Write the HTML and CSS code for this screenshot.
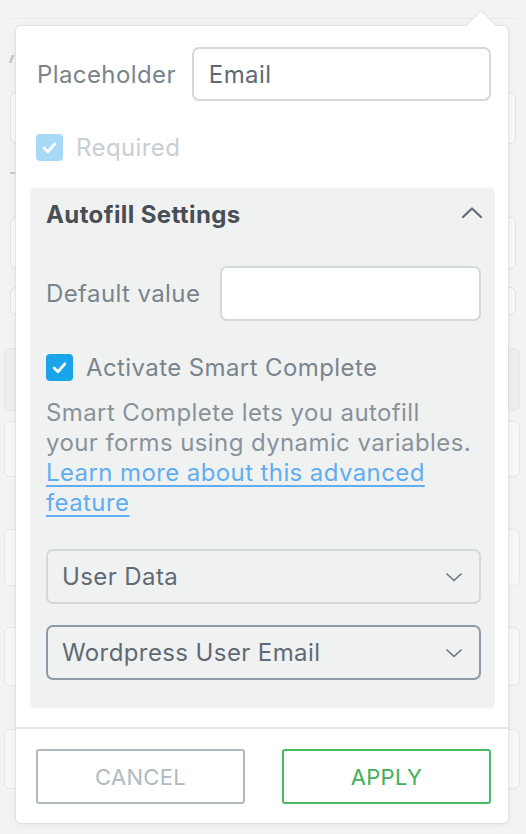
FILE: index.html
```html
<!DOCTYPE html>
<html>
<head>
<meta charset="utf-8">
<link rel="stylesheet" href="styles.css">
</head>
<body>
<div class="page">
  <div class="topbar"></div>
  <div class="bg-content">
    <div class="bg-mark"></div>
    <div class="bg-input first"></div>
    <div class="bg-mark dash"></div>
    <div class="bg-input second"></div>
    <div class="bg-input short"></div>
    <div class="bg-card dark"></div>
    <div class="bg-card c1"></div>
    <div class="bg-card c2"></div>
    <div class="bg-card c3"></div>
    <div class="bg-card c4"></div>
  </div>
</div>

<div class="popup">
  <div class="arrow"></div>
  <div class="popup-body">
    <div class="row placeholder-row">
      <label class="label">Placeholder</label>
      <div class="input">Email</div>
    </div>
    <div class="check-row required">
      <span class="checkbox light">
        <svg viewBox="0 0 16 16" width="16" height="16"><polyline points="3,8.5 6.5,12 13,4.5" fill="none" stroke="#fff" stroke-width="2.6" stroke-linecap="round" stroke-linejoin="round"/></svg>
      </span>
      <span class="check-text">Required</span>
    </div>

    <div class="section">
      <div class="section-head">
        <span class="section-title">Autofill Settings</span>
        <svg class="chev-up" viewBox="0 0 22 13" width="22" height="13"><polyline points="2,11 11,2.5 20,11" fill="none" stroke="#616c76" stroke-width="2.2" stroke-linecap="round" stroke-linejoin="round"/></svg>
      </div>
      <div class="row default-row">
        <label class="label">Default value</label>
        <div class="input empty"></div>
      </div>
      <div class="check-row smart">
        <span class="checkbox blue">
          <svg viewBox="0 0 16 16" width="16" height="16"><polyline points="3,8.5 6.5,12 13,4.5" fill="none" stroke="#fff" stroke-width="2.6" stroke-linecap="round" stroke-linejoin="round"/></svg>
        </span>
        <span class="check-text dark">Activate Smart Complete</span>
      </div>
      <p class="desc">Smart Complete lets you autofill your forms using dynamic variables.<br><a href="#" class="link">Learn more about this advanced feature</a></p>
      <div class="select">
        <span>User Data</span>
        <svg class="chev-down" viewBox="0 0 18 10" width="18" height="10"><polyline points="2,2 9,8.5 16,2" fill="none" stroke="#6b7680" stroke-width="1.7" stroke-linecap="round" stroke-linejoin="round"/></svg>
      </div>
      <div class="select focused">
        <span>Wordpress User Email</span>
        <svg class="chev-down" viewBox="0 0 18 10" width="18" height="10"><polyline points="2,2 9,8.5 16,2" fill="none" stroke="#6b7680" stroke-width="1.7" stroke-linecap="round" stroke-linejoin="round"/></svg>
      </div>
    </div>
  </div>
  <div class="divider"></div>
  <div class="actions">
    <button class="btn cancel">CANCEL</button>
    <button class="btn apply">APPLY</button>
  </div>
</div>
</body>
</html>
```

FILE: styles.css
```css
* { box-sizing: border-box; }
html, body { margin: 0; padding: 0; }
body {
  background: #f2f4f4;
  font-family: "Inter", "Noto Sans", sans-serif;
  letter-spacing: 0.4px;
  width: 526px;
  height: 834px;
  overflow: hidden;
  position: relative;
}

/* background page */
.page { width: 526px; }
.topbar {
  height: 19px;
  border-bottom: 1px solid #e6eaea;
  margin: 0 10px;
}
.bg-content {
  padding: 0 10px;
  display: flex;
  flex-direction: column;
}
.bg-mark {
  width: 3px;
  height: 8px;
  background: #c4cacd;
  margin-top: 36px;
  transform: skewX(-20deg);
}
.bg-mark.dash { width: 5px; height: 2px; margin-top: 28px; transform: none; }
.bg-input {
  height: 52px;
  border: 1px solid #dde2e4;
  border-radius: 6px;
  background: #f7f8f8;
}
.bg-input.first { margin-top: 29px; }
.bg-input.second { margin-top: 43px; }
.bg-input.short { height: 28px; margin-top: 18px; }
.bg-card {
  height: 57px;
  border: 1px solid #e3e7e8;
  border-radius: 6px;
  background: #f6f7f7;
  margin: 0 -4px 0 -6px;
}
.bg-card.dark { background: #eceeee; margin-top: 33px; height: 63px; }
.bg-card.c1 { margin-top: 10px; height: 56px; }
.bg-card.c2 { margin-top: 52px; }
.bg-card.c3 { margin-top: 41px; height: 59px; }
.bg-card.c4 { margin-top: 43px; height: 60px; }

/* popup */
.popup {
  position: absolute;
  left: 16px;
  top: 26px;
  width: 492px;
  height: 797px;
  background: #fff;
  border-radius: 5px;
  box-shadow: 0 0 0 1px rgba(200,208,210,0.35), 0 1px 6px rgba(0,0,0,0.07);
}
.arrow {
  position: absolute;
  width: 22px;
  height: 22px;
  background: #fff;
  transform: rotate(45deg);
  left: 454px;
  top: -10px;
  box-shadow: -1px -1px 2px rgba(0,0,0,0.05);
}
.popup-body {
  position: relative;
  padding: 21px 13px 0 14px;
}
.row {
  display: flex;
  align-items: center;
}
.label {
  font-size: 24px;
  color: #7a848d;
  white-space: nowrap;
}
.input {
  flex: 1;
  height: 54px;
  border: 2px solid #d3d8dc;
  border-radius: 7px;
  background: #fff;
  font-size: 24px;
  color: #5f6a75;
  display: flex;
  align-items: center;
  padding-left: 15px;
}
.placeholder-row { padding: 0 4px 0 7px; gap: 16px; }

.check-row {
  display: flex;
  align-items: center;
  gap: 13px;
}
.required { margin: 33px 0 0 6px; height: 27px; }
.checkbox {
  width: 27px;
  height: 27px;
  border-radius: 4px;
  display: flex;
  align-items: center;
  justify-content: center;
  flex: none;
}
.checkbox svg { width: 17px; height: 17px; }
.checkbox.light { background: #a7d9f6; }
.checkbox.blue { background: #1aa5ea; }
.check-text { font-size: 24px; color: #c9ced2; }
.check-text.dark { color: #7a848d; }

.section {
  margin-top: 27px;
  background: #f0f2f2;
  border-radius: 5px;
  padding: 12px 14px 28px 16px;
}
.section-head {
  display: flex;
  align-items: center;
  justify-content: space-between;
  height: 28px;
}
.section-title {
  font-size: 24px;
  font-weight: 700;
  color: #484e56;
}
.chev-up { margin-right: -2px; margin-top: -3px; }
.default-row { margin-top: 38px; gap: 20px; }
.default-row .input { height: 55px; }
.smart { margin-top: 33px; height: 27px; }
.desc {
  margin: 17px 0 0 0;
  font-size: 24px;
  line-height: 30px;
  color: #89929a;
  max-width: 430px;
}
.link {
  color: #62adef;
  text-decoration: underline;
  text-underline-offset: 4px;
  text-decoration-thickness: 2px;
}
.select {
  margin-top: 31px;
  height: 55px;
  border: 2px solid #d3d8dc;
  border-radius: 7px;
  display: flex;
  align-items: center;
  justify-content: space-between;
  padding: 0 16px 0 14px;
  font-size: 24px;
  color: #5f6a75;
}
.select.focused {
  margin-top: 21px;
  border-color: #8e9aa5;
}
.divider {
  margin-top: 19px;
  height: 2px;
  background: #e2e8ea;
}
.actions {
  display: grid;
  grid-template-columns: 1fr 1fr;
  gap: 37px;
  padding: 20px 17px 0 20px;
}
.btn {
  height: 55px;
  background: #fff;
  border-radius: 3px;
  font-family: "Inter", "Noto Sans", sans-serif;
  font-size: 22px;
  letter-spacing: 0.3px;
  cursor: pointer;
}
.cancel { border: 2px solid #b1b9c1; color: #b1b9c1; }
.apply { border: 2px solid #4cb963; color: #41b058; }
```
